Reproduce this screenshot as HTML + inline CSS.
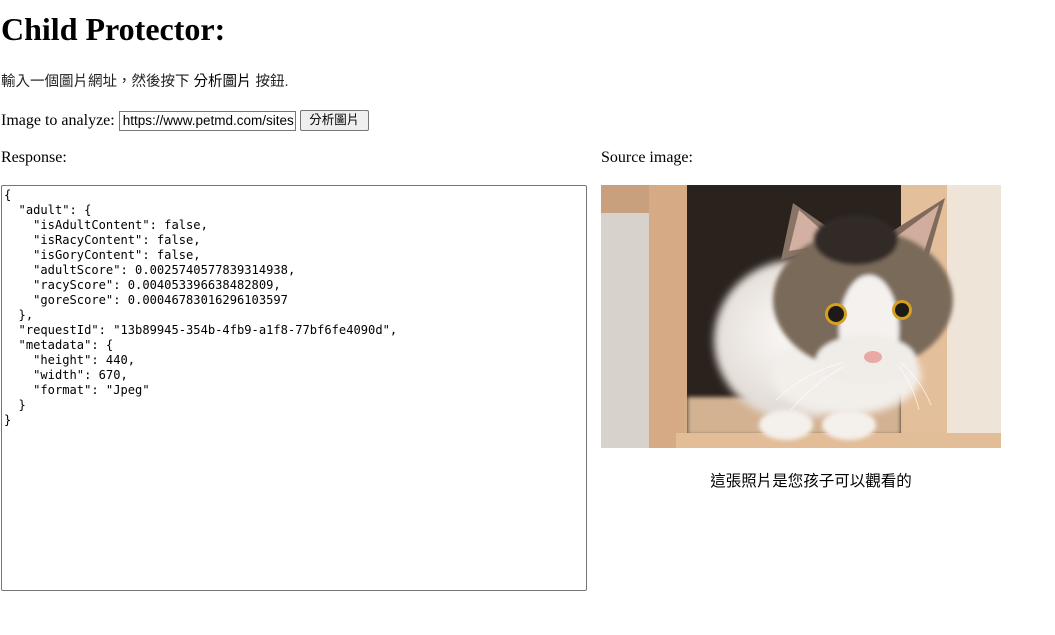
<!DOCTYPE html>
<html><head><meta charset="utf-8">
<style>
body{margin:0;padding:0 0 0 1px;font-family:"Liberation Serif",serif;font-size:16px;color:#000;background:#fff;width:1054px;height:635px;overflow:hidden;position:relative}
h1{position:absolute;left:1px;top:9px;margin:0;font-size:32px;font-weight:bold;line-height:40px}
.p1{position:absolute;left:1px;top:70px;font-family:"Liberation Sans","Noto Sans CJK TC",sans-serif;font-size:14.5px;color:#222}
.row{position:absolute;left:1px;top:110px;font-size:16px;display:flex;align-items:center}
.inp{margin-left:4px;width:177px;height:20px;border:1px solid #767676;box-sizing:border-box;font-family:"Liberation Sans",sans-serif;font-size:13.5px;padding:0 3px;line-height:18px;overflow:hidden;white-space:nowrap}
.btn{margin-left:4px;height:21px;width:69px;box-sizing:border-box;border:1px solid #767676;border-radius:2px;background:#efefef;font-family:"Liberation Sans","Noto Sans CJK TC",sans-serif;font-size:12.5px;text-align:center;line-height:19px}
.lab{position:absolute;top:149px;font-size:16px}
.ta{position:absolute;left:1px;top:185px;width:586px;height:406px;box-sizing:border-box;border:1px solid #767676;border-radius:2px;padding:2px 2px}
pre{margin:0;font-family:"DejaVu Sans Mono","Liberation Mono",monospace;font-size:12.1px;line-height:15px;color:#000}
.cap{position:absolute;left:601px;width:420px;text-align:center;top:469px;font-family:"Liberation Sans","Noto Sans CJK TC",sans-serif;font-size:15.5px}
</style></head><body>
<h1>Child Protector:</h1>
<div class="p1">輸入一個圖片網址，然後按下 <span style="color:#000">分析圖片</span> 按鈕.</div>
<div class="row">Image to analyze:<div class="inp">https://www.petmd.com/sites</div><div class="btn">分析圖片</div></div>
<div class="lab" style="left:1px">Response:</div>
<div class="lab" style="left:601px">Source image:</div>
<div class="ta"><pre>{
  "adult": {
    "isAdultContent": false,
    "isRacyContent": false,
    "isGoryContent": false,
    "adultScore": 0.0025740577839314938,
    "racyScore": 0.004053396638482809,
    "goreScore": 0.00046783016296103597
  },
  "requestId": "13b89945-354b-4fb9-a1f8-77bf6fe4090d",
  "metadata": {
    "height": 440,
    "width": 670,
    "format": "Jpeg"
  }
}</pre></div>
<svg style="position:absolute;left:601px;top:185px" width="400" height="263" viewBox="0 0 400 263">
<defs>
<filter id="b" x="-20%" y="-20%" width="140%" height="140%"><feGaussianBlur stdDeviation="4"/></filter>
<filter id="b2"><feGaussianBlur stdDeviation="2"/></filter>
<radialGradient id="body" cx="0.45" cy="0.45" r="0.6"><stop offset="0" stop-color="#fbf8f5"/><stop offset="1" stop-color="#ddd6d0"/></radialGradient>
</defs>
<rect width="400" height="263" fill="#2a221d"/>
<rect x="0" y="0" width="48" height="263" fill="#d8d2cc"/>
<rect x="0" y="0" width="48" height="28" fill="#c9a07d"/>
<rect x="48" y="0" width="38" height="263" fill="#d6aa84"/>
<rect x="300" y="0" width="46" height="263" fill="#e4bf9b"/>
<rect x="346" y="0" width="54" height="263" fill="#efe4d8"/>
<rect x="86" y="212" width="214" height="38" fill="#d3b292" filter="url(#b2)"/>
<rect x="75" y="248" width="325" height="15" fill="#e2bd98"/>
<g filter="url(#b)">
<ellipse cx="195" cy="155" rx="82" ry="80" fill="url(#body)"/>
<ellipse cx="245" cy="190" rx="75" ry="40" fill="#f2eeea"/>
</g>
<ellipse cx="185" cy="240" rx="27" ry="15" fill="#f4f0ec" filter="url(#b2)"/>
<ellipse cx="248" cy="240" rx="27" ry="15" fill="#f4f0ec" filter="url(#b2)"/>
<polygon points="180,75 192,18 245,55" fill="#8a7466"/>
<polygon points="188,66 198,25 235,58" fill="#d2b0a2"/>
<polygon points="285,50 344,13 325,80" fill="#806a5c"/>
<polygon points="295,52 338,20 322,70" fill="#d0ad9c"/>
<g filter="url(#b2)">
<ellipse cx="262" cy="115" rx="90" ry="70" fill="#7a6a5a"/>
<ellipse cx="255" cy="55" rx="42" ry="25" fill="#302a26"/>
<ellipse cx="268" cy="145" rx="30" ry="55" fill="#f4f1ee"/>
<ellipse cx="265" cy="175" rx="50" ry="25" fill="#f0ece8"/>
</g>
<circle cx="235" cy="129" r="11" fill="#d5a020"/>
<circle cx="235" cy="129" r="8" fill="#1d1a18"/>
<circle cx="301" cy="125" r="10" fill="#d5a020"/>
<circle cx="301" cy="125" r="7" fill="#1d1a18"/>
<ellipse cx="272" cy="172" rx="9" ry="6" fill="#e9a9a4"/>
<g stroke="#ffffff" stroke-width="0.8" fill="none" opacity="0.8">
<path d="M240 178 Q200 190 175 215"/><path d="M242 182 Q210 200 190 225"/><path d="M300 178 Q320 195 330 220"/><path d="M298 182 Q312 200 318 225"/>
</g>
</svg>
<div class="cap">這張照片是您孩子可以觀看的</div>
</body></html>
